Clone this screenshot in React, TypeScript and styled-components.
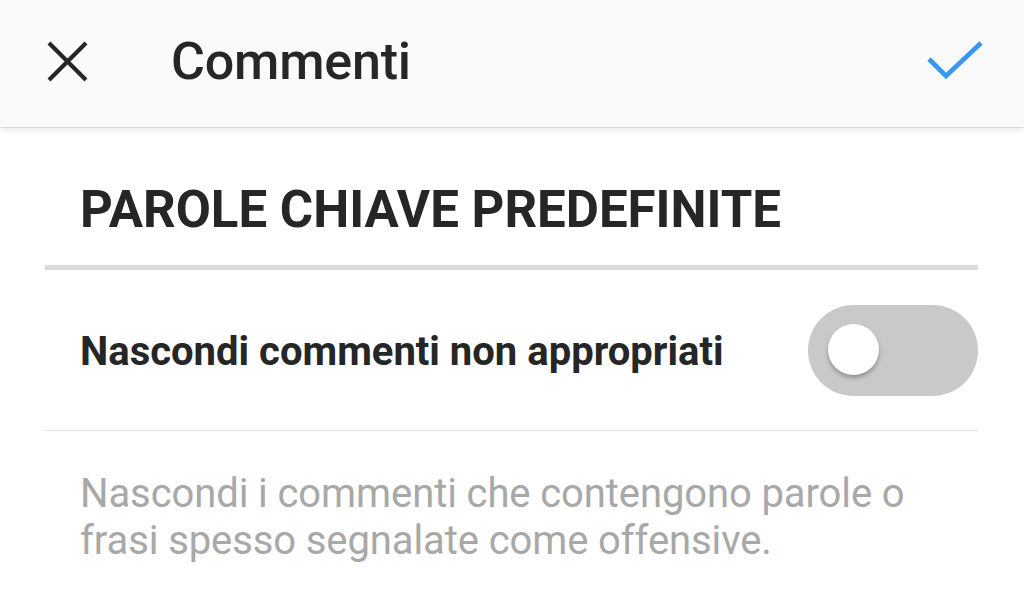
import React, { useState } from "react";
import styled, { createGlobalStyle } from "styled-components";

const GlobalStyle = createGlobalStyle`
  html, body {
    margin: 0;
    padding: 0;
    background: #ffffff;
  }
  body {
    font-family: Roboto, "Liberation Sans", sans-serif;
    -webkit-font-smoothing: antialiased;
  }
`;

const Page = styled.div`
  display: flex;
  flex-direction: column;
  width: 1024px;
  height: 593px;
  overflow: hidden;
  background: #ffffff;
`;

const TopBar = styled.header`
  position: relative;
  z-index: 1;
  display: flex;
  align-items: center;
  height: 127px;
  padding: 0 40px 4px 47px;
  box-sizing: border-box;
  background: #fafafa;
  box-shadow: 0 1px 0 rgba(0, 0, 0, 0.08), 0 3px 6px rgba(0, 0, 0, 0.09);
`;

const IconButton = styled.button`
  display: flex;
  align-items: center;
  justify-content: center;
  padding: 0;
  border: 0;
  background: none;
  cursor: pointer;
`;

const Title = styled.h1`
  flex: 1;
  margin: 0 0 0 83px;
  font-size: 52px;
  line-height: 52px;
  font-weight: 500;
  color: #262626;
  letter-spacing: -0.2px;
`;

const Content = styled.main`
  display: flex;
  flex-direction: column;
  margin: 0 46px 0 45px;
`;

const SectionTitle = styled.h2`
  margin: 0;
  padding: 57px 0 30px 35px;
  font-size: 51px;
  line-height: 51px;
  font-weight: 700;
  color: #262626;
  border-bottom: 5px solid #dbdbdb;
`;

const SettingRow = styled.div`
  display: flex;
  align-items: center;
  justify-content: space-between;
  height: 161px;
  padding-left: 35px;
  border-bottom: 1px solid #e3e3e3;
  box-sizing: border-box;
`;

const SettingLabel = styled.span`
  font-size: 40px;
  line-height: 40px;
  font-weight: 700;
  color: #262626;
  margin-top: 4px;
`;

const Track = styled.button<{ $on: boolean }>`
  display: flex;
  align-items: center;
  justify-content: ${(p) => (p.$on ? "flex-end" : "flex-start")};
  width: 170px;
  height: 91px;
  padding: 0 20px;
  border: 0;
  border-radius: 46px;
  background: ${(p) => (p.$on ? "#3897f0" : "#c8c9cb")};
  box-sizing: border-box;
  cursor: pointer;
`;

const Knob = styled.span`
  width: 51px;
  height: 51px;
  margin-top: -2px;
  border-radius: 50%;
  background: #ffffff;
  box-shadow: 0 3px 4px rgba(0, 0, 0, 0.28);
`;

const Description = styled.p`
  margin: 39px 0 0 35px;
  font-size: 40px;
  line-height: 47px;
  font-weight: 400;
  color: #a8a8a8;
  letter-spacing: -0.1px;
`;

const CloseIcon = () => (
  <svg width="41" height="41" viewBox="0 0 41 41">
    <path d="M2 2 L39 39 M39 2 L2 39" stroke="#262626" strokeWidth="4.2" fill="none" />
  </svg>
);

const CheckIcon = () => (
  <svg width="58" height="44" viewBox="0 0 58 44">
    <path d="M3 19 L20 36 L55 3" stroke="#3897f0" strokeWidth="4.6" fill="none" />
  </svg>
);

export default function App() {
  const [hide, setHide] = useState(false);

  return (
    <>
      <GlobalStyle />
      <Page>
        <TopBar>
          <IconButton aria-label="Chiudi">
            <CloseIcon />
          </IconButton>
          <Title>Commenti</Title>
          <IconButton aria-label="Conferma">
            <CheckIcon />
          </IconButton>
        </TopBar>
        <Content>
          <SectionTitle>PAROLE CHIAVE PREDEFINITE</SectionTitle>
          <SettingRow>
            <SettingLabel>Nascondi commenti non appropriati</SettingLabel>
            <Track $on={hide} onClick={() => setHide(!hide)} aria-pressed={hide}>
              <Knob />
            </Track>
          </SettingRow>
          <Description>
            Nascondi i commenti che contengono parole o
            <br />
            frasi spesso segnalate come offensive.
          </Description>
        </Content>
      </Page>
    </>
  );
}
